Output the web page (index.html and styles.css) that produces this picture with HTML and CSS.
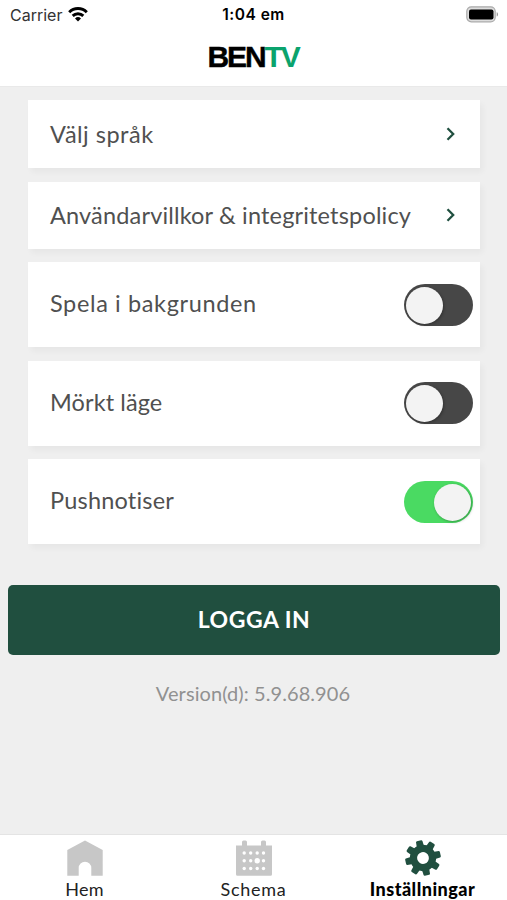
FILE: index.html
```html
<!DOCTYPE html>
<html lang="sv">
<head>
<meta charset="utf-8">
<title>BENTV – Inställningar</title>
<link rel="stylesheet" href="styles.css">
</head>
<body>
<header class="header">
  <div class="status">
    <div class="carrier"><span>Carrier</span>
      <svg width="20" height="15" viewBox="0 0 20 15" fill="none" stroke="#000" stroke-width="2.9"><path d="M1.200 5.200a12.400 12.400 0 0 1 17.600 0M4.700 8.900a7.500 7.500 0 0 1 10.600 0"/><path d="M10 14.400 7 11.500a4.300 4.300 0 0 1 6 0z" fill="#000" stroke="none"/></svg>
    </div>
    <div class="clock">1:04 em</div>
    <svg class="battery" width="33" height="17" viewBox="0 0 33 17"><rect x=".8" y=".8" width="28.400" height="15" rx="4.500" fill="#ddd" stroke="#aaa" stroke-width="1.200"/><rect x="3" y="3.400" width="24.500" height="10" rx="2"/><path d="M30.700 6.200c1.800.5 1.800 3.700 0 4.200z" fill="#999"/></svg>
  </div>
  <h1 class="brand">BEN<span>TV</span></h1>
</header>
<main class="content">
  <section class="list">
    <a class="card link"><span class="t-language">Välj språk</span><svg class="chevron" width="10" height="14" viewBox="0 0 10 14"><path d="m1.500 1.200 5.700 5.800-5.700 5.800"/></svg></a>
    <a class="card link policy"><span class="t-policy">Användarvillkor &amp; integritetspolicy</span><svg class="chevron" width="10" height="14" viewBox="0 0 10 14"><path d="m1.500 1.200 5.700 5.800-5.700 5.800"/></svg></a>
    <div class="card"><span class="t-background">Spela i bakgrunden</span><i class="switch"></i></div>
    <div class="card"><span class="t-dark">Mörkt läge</span><i class="switch"></i></div>
    <div class="card"><span class="t-push">Pushnotiser</span><i class="switch on"></i></div>
  </section>
  <button class="login"><span>LOGGA IN</span></button>
  <p class="version"><span>Version(d): 5.9.68.906</span></p>
</main>
<nav class="tabs">
  <a class="tab"><svg width="38" height="38" viewBox="0 0 38 38" fill="#c7c7c7"><path d="M19 1.500 36.700 11v25.700H25.300V29a6.300 6.300 0 0 0-12.600 0v7.700H1.300V11z"/></svg><span class="t-home">Hem</span></a>
  <a class="tab"><svg width="38" height="38" viewBox="0 0 38 38"><path fill="#c7c7c7" d="M1 6.500h6V3q0-1.500 1.500-1.500h2Q12 1.500 12 3v3.500h14V3q0-1.500 1.500-1.500h2Q31 1.500 31 3v3.500h6v28.700q0 1.500-1.500 1.500h-33Q1 36.700 1 35.200z"/><g fill="#fff"><circle cx="9.200" cy="14" r="1.700"/><circle cx="15.700" cy="14" r="1.700"/><circle cx="22.200" cy="14" r="1.700"/><circle cx="28.500" cy="14" r="1.700"/><circle cx="9.200" cy="21.700" r="1.700"/><circle cx="15.700" cy="21.700" r="1.700"/><circle cx="22.200" cy="21.700" r="2.700"/><circle cx="28.500" cy="21.700" r="1.700"/><circle cx="9.200" cy="29.500" r="1.700"/><circle cx="15.700" cy="29.500" r="1.700"/><circle cx="22.200" cy="29.500" r="1.700"/><circle cx="28.500" cy="29.500" r="1.700"/></g></svg><span class="t-schedule">Schema</span></a>
  <a class="tab active"><svg width="38" height="38" viewBox="0 0 38 38"><defs><path id="tooth" d="M15.300 8 15.700 2.200q.2-1 1.200-1h4.200q1 0 1.200 1l.4 5.800z"/></defs><g transform="rotate(-13 19 19)" fill="#204f3f"><circle cx="19" cy="19" r="9.500" fill="none" stroke="#204f3f" stroke-width="7.200"/><use href="#tooth"/><use href="#tooth" transform="rotate(45 19 19)"/><use href="#tooth" transform="rotate(90 19 19)"/><use href="#tooth" transform="rotate(135 19 19)"/><use href="#tooth" transform="rotate(180 19 19)"/><use href="#tooth" transform="rotate(225 19 19)"/><use href="#tooth" transform="rotate(270 19 19)"/><use href="#tooth" transform="rotate(315 19 19)"/></g></svg><span class="t-settings">Inställningar</span></a>
</nav>
</body>
</html>
```
FILE: styles.css
```css
* { box-sizing: border-box; }
body { margin: 0; height: 900px; overflow: hidden; display: flex; flex-direction: column; background: #efefef; color: #505050; font-family: Lato, sans-serif; font-variant-ligatures: none; }
.header { height: 87px; background: #fff; border-bottom: 1px solid #e9e9e9; color: #000; }
.status { height: 30px; display: grid; grid-template-columns: 1fr auto 1fr; align-items: center; padding: 0 8px 0 10px; font: 16px/30px Inter, sans-serif; }
.carrier { display: flex; align-items: center; gap: 6px; color: #333; letter-spacing: 0; }
.carrier svg { margin-top: -2px; }
.clock { font-weight: 600; font-size: 15.500px; letter-spacing: .5px; position: relative; left: -1px; }
.battery { justify-self: end; margin-top: -2px; }
.brand { margin: 11px 0 0; text-align: center; font: bold 30px/32px "Liberation Sans", sans-serif; letter-spacing: -2.100px; padding-right: 1px; -webkit-text-stroke: .4px; }
.brand span { color: #0ba36d; -webkit-text-stroke: 0; }
.content { flex: 1; padding: 13px 7px 0 8px; }
.list { display: flex; flex-direction: column; gap: 13.500px; margin: 0 20px; }
.card { height: 85px; background: #fff; box-shadow: 3px 4px 6px rgba(0,0,0,.04); display: flex; align-items: center; justify-content: space-between; padding: 0 7px 3px 22px; font-size: 23.500px; line-height: 32px; white-space: nowrap; }
.link { height: 68px; padding-right: 24px; padding-bottom: 1px; }
.policy { height: 67px; }
.t-language { letter-spacing: .5px; }
.t-policy { letter-spacing: .17px; }
.t-background { letter-spacing: .63px; }
.t-dark { letter-spacing: .1px; }
.t-push { letter-spacing: .2px; }
.chevron { fill: none; stroke: #204f3f; stroke-width: 2.300; }
.switch { width: 69px; height: 42px; border-radius: 21px; background: #474747; padding: 3px 2px; margin-top: 3px; display: flex; }
.switch::before { content: ""; width: 37px; height: 37px; border-radius: 50%; background: #f3f3f3; box-shadow: 1px 1px 3px rgba(0,0,0,.3); }
.switch.on { background: #4ada62; justify-content: flex-end; }
.login { display: block; width: 100%; height: 70px; margin-top: 41px; padding: 0 0 3px; border: 0; border-radius: 5px; background: #204f3f; color: #fff; font: bold 23px/28px Lato, sans-serif; letter-spacing: .5px; }
.version { margin: 24px 2px 0 0; text-align: center; color: #919191; font-size: 20px; line-height: 28px; letter-spacing: .08px; }
.tabs { height: 66px; border-top: 1px solid #e4e4e4; background: #fff; display: grid; grid-template-columns: repeat(3, 1fr); }
.tab { display: flex; flex-direction: column; align-items: center; padding-top: 4px; font-size: 18px; line-height: 25px; color: #222; }
.t-home { letter-spacing: .2px; }
.t-schedule { letter-spacing: .75px; }
.active { font-weight: 900; color: #000; }
.t-settings { letter-spacing: .48px; }
```
